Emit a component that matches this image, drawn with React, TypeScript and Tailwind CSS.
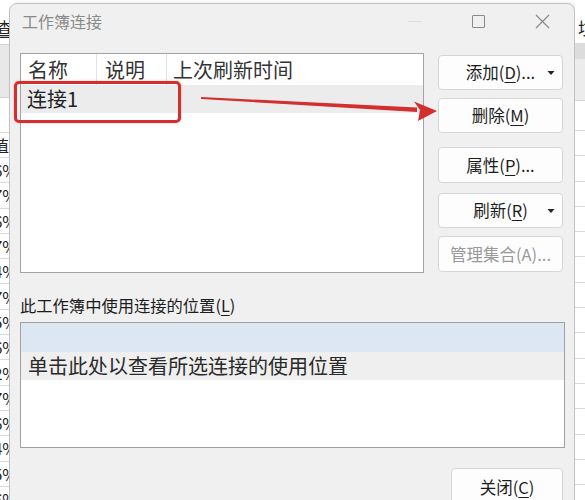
import React from "react";

const FONT = "font-['Noto_Sans_CJK_SC','Noto_Sans',sans-serif]";

function Mn({ c }: { c: string }) {
  return <span className="underline underline-offset-[3px] decoration-[1px]">{c}</span>;
}

function Caret() {
  return (
    <svg className="absolute right-[7px] top-1/2 -translate-y-1/2" width="8" height="5" viewBox="0 0 8 5">
      <polygon points="0.5,0.5 7.5,0.5 4,4.5" fill="#222" />
    </svg>
  );
}

function Btn({ children, h = "h-[35px]", caret = false, disabled = false }: { children: React.ReactNode; h?: string; caret?: boolean; disabled?: boolean }) {
  return (
    <div
      className={`relative ${h} rounded-[4px] border border-[#d6d6d6] bg-[#fdfdfd] flex items-center justify-center text-[16.5px] ${disabled ? "text-[#9a9a9a]" : "text-[#1c1c1c]"}`}
    >
      <span>{children}</span>
      {caret && <Caret />}
    </div>
  );
}

const leftVals = ["6%", "7%", "6%", "7%", "4%", "7%", "5%", "6%", "2%", "7%", "6%", "4%", "5%", "6%"];

export default function App() {
  return (
    <div className={`relative w-[585px] h-[500px] overflow-hidden bg-white flex ${FONT}`}>
      {/* left spreadsheet strip */}
      <div className="w-[9px] shrink-0 flex flex-col overflow-hidden bg-white">
        <div className="h-[12px] shrink-0" />
        <div className="h-[32px] shrink-0 flex justify-end items-center text-[17px] text-[#222] whitespace-nowrap">
          <span className="underline underline-offset-[2px] -mr-[4px]">查</span>
        </div>
        <div className="h-[54px] shrink-0 bg-[#e8e8e8] border-y border-[#d4d4d4]" />
        <div className="h-[35px] shrink-0 border-b border-[#dadada]" />
        <div className="h-[25px] shrink-0 border-b border-[#dadada] flex justify-end items-center text-[16px] text-[#222] whitespace-nowrap">
          <span>值</span>
        </div>
        {leftVals.map((v, i) => (
          <div
            key={i}
            className="h-[25.3px] shrink-0 border-b border-[#dadada] flex justify-end items-center text-[16px] text-[#222] whitespace-nowrap"
          >
            <span className="-mr-[8px]">{v}</span>
          </div>
        ))}
      </div>

      {/* dialog */}
      <div className="w-[566px] shrink-0 mt-[3px] h-[510px] bg-[#f0f0f0] rounded-t-[8px] border border-[#c2c2c2] shadow-[2px_0_4px_rgba(0,0,0,0.12)] flex flex-col">
        {/* title bar */}
        <div className="h-[34px] flex items-center pl-[12px] pr-[24px]">
          <span className="text-[16px] text-[#8a8a8a]">工作簿连接</span>
          <div className="flex-1" />
          <div className="w-[14px] h-[1px] bg-[#dedede]" />
          <div className="w-[13px] h-[13px] border border-[#8a8a8a] rounded-[1px] ml-[50px]" />
          <svg className="ml-[50px]" width="15" height="15" viewBox="0 0 15 15">
            <path d="M1 1 L14 14 M14 1 L1 14" stroke="#8a8a8a" strokeWidth="1.2" />
          </svg>
        </div>

        {/* top section */}
        <div className="flex pl-[10px] mt-[15px]">
          <div className="w-[404px] h-[220px] border border-[#a3a3a3] bg-white flex flex-col">
            <div className="h-[31px] flex text-[20px] text-[#333] leading-none">
              <div className="w-[76px] border-r border-[#e2e2e2] flex items-center pl-[7px]">名称</div>
              <div className="w-[70px] border-r border-[#e2e2e2] flex items-center pl-[8px]">说明</div>
              <div className="flex-1 flex items-center pl-[6px]">上次刷新时间</div>
            </div>
            <div className="h-[28px] bg-[#ececec] flex items-center pl-[6px] text-[20px] text-[#222] leading-none">
              连接1
            </div>
          </div>

          <div className="w-[125px] ml-[14px] mt-[2px] flex flex-col">
            <Btn caret>
              添加(<Mn c="D" />)...
            </Btn>
            <div className="mt-[8px]">
              <Btn>
                删除(<Mn c="M" />)
              </Btn>
            </div>
            <div className="mt-[14px]">
              <Btn h="h-[36px]">
                属性(<Mn c="P" />)...
              </Btn>
            </div>
            <div className="mt-[10px]">
              <Btn caret>
                刷新(<Mn c="R" />)
              </Btn>
            </div>
            <div className="mt-[8px]">
              <Btn h="h-[36px]" disabled>
                管理集合(A)...
              </Btn>
            </div>
          </div>
        </div>

        {/* bottom section */}
        <div className="pl-[10px] mt-[22px] h-[20px] flex items-center text-[16.3px] text-[#1c1c1c] leading-none">
          此工作簿中使用连接的位置(<Mn c="L" />)
        </div>
        <div className="ml-[10px] mt-[7px] w-[545px] h-[126px] border border-[#a0a0a0] bg-white flex flex-col">
          <div className="h-[29px] bg-[#dce7f3]" />
          <div className="h-[28px] bg-[#efefef] flex items-center pl-[7px] text-[20px] text-[#2a2a2a] leading-none">
            单击此处以查看所选连接的使用位置
          </div>
        </div>
        <div className="flex justify-end pr-[11px] mt-[20px]">
          <div className="w-[112px] h-[40px] rounded-[4px] border border-[#d6d6d6] bg-[#fdfdfd] flex items-start justify-center pt-[6px] text-[16.5px] text-[#1c1c1c]">
            <span>
              关闭(<Mn c="C" />)
            </span>
          </div>
        </div>
      </div>

      {/* right spreadsheet strip */}
      <div className="flex-1 flex flex-col overflow-hidden bg-white">
        <div className="h-[12px] shrink-0" />
        <div className="h-[31px] shrink-0 flex items-center pl-[3px] text-[17px] text-[#222] whitespace-nowrap">
          <span>坟</span>
        </div>
        <div className="h-[16px] shrink-0 bg-[#dcdcdc]" />
        <div className="h-[42px] shrink-0 bg-[#ececec] border-b border-[#d4d4d4]" />
        <div className="h-[30px] shrink-0 border-b border-[#dadada]" />
        {Array.from({ length: 15 }).map((_, i) => (
          <div key={i} className="h-[25.3px] shrink-0 border-b border-[#dadada]" />
        ))}
      </div>

      {/* annotation overlay: red box + arrow */}
      <div className="absolute left-[14px] top-[81px] w-[167px] h-[42px] border-[3px] border-[#d32f2f] rounded-[5px] shadow-[0_0_2px_rgba(200,40,40,0.4)]" />
      <svg className="absolute left-0 top-0 pointer-events-none" width="585" height="500" viewBox="0 0 585 500">
        <polygon points="201,97 417,107.5 417,112 201,99" fill="#d32f2f" />
        <polygon points="414,101.5 437,111 418,121 420,110" fill="#d32f2f" />
      </svg>
    </div>
  );
}
